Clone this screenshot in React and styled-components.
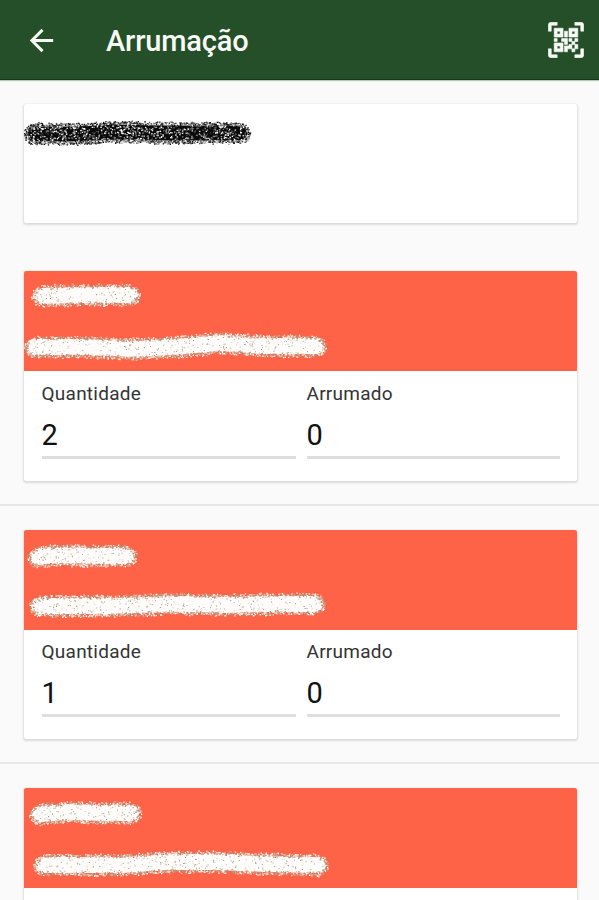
import styled, { createGlobalStyle } from "styled-components";

const GlobalStyle = createGlobalStyle`
  *,
  *::before,
  *::after {
    box-sizing: border-box;
  }

  body {
    margin: 0;
    height: 900px;
    overflow: hidden;
    background: #fafafa;
    color: #111;
    font-family: Roboto, "Liberation Sans", sans-serif;
  }
`;

const Screen = styled.div`
  height: 900px;
  overflow: hidden;
`;

const AppBar = styled.header`
  display: flex;
  align-items: center;
  height: 80px;
  padding: 1px 15px 0 24px;
  background: #254f29;
  border-bottom: 1px solid #0f3d17;
  box-shadow: 0 1px 1px #b5c9b7;
  color: #f8fbf5;
`;

const IconButton = styled.button`
  display: flex;
  padding: 0;
  border: none;
  background: none;
  color: inherit;
`;

const Title = styled.h1`
  flex: 1;
  margin: 1px 0 0 47px;
  font-size: 29px;
  font-weight: 500;
  line-height: 40px;
  letter-spacing: -0.15px;
`;

const Card = styled.section`
  overflow: hidden;
  background: #fff;
  border-radius: 2px;
  box-shadow: 0 1px 2px 1px rgba(0, 0, 0, 0.12);
`;

const Summary = styled(Card)`
  height: 119px;
  margin: 24px 22px 24px 24px;
`;

const Item = styled.li`
  padding: 24px 22px 23px 24px;
  border-bottom: 2px solid #e8e8e8;
`;

const List = styled.ul`
  margin: 0;
  padding: 0;
  list-style: none;
`;

const CardHeader = styled.div`
  height: 100px;
  background: #ff6347;
`;

const Fields = styled.div`
  display: grid;
  grid-template-columns: 254px 253px;
  column-gap: 11px;
  height: 109.5px;
  padding: 9.5px 18px 0 17.5px;
`;

const Label = styled.div`
  font-size: 19px;
  line-height: 26px;
  letter-spacing: 0.25px;
  color: #333;
`;

const Value = styled.div`
  height: 52px;
  padding-top: 10px;
  border-bottom: 3px solid #dedede;
  font-size: 29px;
  line-height: 36px;
`;

const Drawing = styled.svg`
  display: block;
`;

const whiteSpray = {
  core: "#fdfcfa",
  coreWidth: 16,
  edge: ["#fdfaf6", "#fff", "#e9d8c6", "#c8a68c", "#b88970"],
  specks: ["#d9c9b9", "#b5a596", "#eee4da", "#a08f82"],
  speckRate: 1.1,
  speckSize: 1,
  grain: 1.4,
};

const blackSpray = {
  core: "#0b0b0b",
  coreWidth: 15,
  edge: ["#000", "#111", "#555", "#999", "#222"],
  specks: ["#aaa", "#eee", "#777", "#fff", "#444"],
  speckRate: 3.3,
  speckSize: 1.3,
  grain: 1.3,
};

const items = [
  {
    id: 1,
    quantity: 2,
    stored: 0,
    code: [[17, 25], [60, 24], [106, 24]],
    name: [[10, 76], [60, 76], [110, 78], [150, 76], [199, 72], [235, 75], [292, 75]],
  },
  {
    id: 2,
    quantity: 1,
    stored: 0,
    code: [[13, 27], [37, 25], [65, 26], [103, 26]],
    name: [[15, 76], [85, 76], [153, 74], [203, 75], [245, 74], [291, 74]],
  },
  {
    id: 3,
    code: [[15, 26], [46, 24], [80, 25], [107, 25]],
    name: [[19, 77], [100, 77], [145, 74], [190, 74], [240, 76], [294, 77]],
  },
];

function createRandom(seed) {
  let state = seed;
  return () => {
    state = (state * 1664525 + 1013904223) % 4294967296;
    return state / 4294967296;
  };
}

function heightAt(points, x) {
  const next = points.findIndex((p) => p[0] >= x);
  if (next === -1) return points[points.length - 1][1];
  if (next === 0) return points[0][1];
  const [x1, y1] = points[next - 1];
  const [x2, y2] = points[next];
  return y1 + ((y2 - y1) * (x - x1)) / (x2 - x1);
}

function dot(x, y, size) {
  return `M${x.toFixed(1)} ${y.toFixed(1)}h${size}v${size}h-${size}z`;
}

// Grain is grouped by colour, so a stroke needs only one path for each colour
function scatter(points, spray, seed) {
  const random = createRandom(seed);
  const start = points[0][0];
  const end = points[points.length - 1][0];
  const edge = spray.edge.map(() => "");
  const specks = spray.specks.map(() => "");

  for (let x = start; x <= end; x += 0.28) {
    const side = random() < 0.5 ? -1 : 1;
    const distance = 6.5 + (random() + random()) * 2.5;
    const i = Math.floor(random() * edge.length);
    edge[i] += dot(x, heightAt(points, x) + side * distance - 0.5, spray.grain);
  }

  [start, end].forEach((x, index) => {
    for (let n = 0; n < 60; n++) {
      const angle = (random() - 0.5) * Math.PI + (index === 0 ? Math.PI : 0);
      const distance = 6 + random() * 4;
      const i = Math.floor(random() * edge.length);
      edge[i] += dot(
        x + Math.cos(angle) * distance,
        heightAt(points, x) + Math.sin(angle) * distance,
        spray.grain
      );
    }
  });

  const count = (end - start + 14) * spray.speckRate;
  for (let n = 0; n < count; n++) {
    const x = start - 7 + random() * (end - start + 14);
    const y = heightAt(points, x) + (random() - 0.5) * 16;
    const i = Math.floor(random() * specks.length);
    specks[i] += dot(x, y, spray.speckSize);
  }

  return { edge, specks };
}

function Scribble({ points, spray = whiteSpray, seed }) {
  const { edge, specks } = scatter(points, spray, seed);

  return (
    <g>
      <polyline
        points={points.join(" ")}
        fill="none"
        stroke={spray.core}
        strokeWidth={spray.coreWidth}
        strokeLinecap="round"
        strokeLinejoin="round"
      />
      {edge.map((d, i) => (
        <path key={`edge-${i}`} d={d} fill={spray.edge[i]} />
      ))}
      {specks.map((d, i) => (
        <path key={`speck-${i}`} d={d} fill={spray.specks[i]} />
      ))}
    </g>
  );
}

function ArrowBack() {
  return (
    <svg width="35" height="35" viewBox="0 0 24 24" fill="currentColor">
      <path d="M20 11H7.83l5.59-5.59L12 4l-8 8 8 8 1.41-1.41L7.83 13H20v-2z" />
    </svg>
  );
}

function QrCodeScan() {
  return (
    <svg
      width="36"
      height="36"
      viewBox="-0.2 -0.2 24.4 24.4"
      fill="currentColor"
      stroke="currentColor"
      strokeWidth="0.4"
      strokeLinejoin="round"
    >
      <path d="M4,4H10V10H4V4M20,4V10H14V4H20M14,15H16V13H14V11H16V13H18V11H20V13H18V15H20V18H18V20H16V18H13V20H11V16H14V15M16,15V18H18V15H16M4,20V14H10V20H4M6,6V8H8V6H6M16,6V8H18V6H16M6,16V18H8V16H6M4,11H6V13H4V11M9,11H13V15H11V13H9V11M11,6H13V10H11V6M2,2V6H0V2A2,2 0 0,1 2,0H6V2H2M22,0A2,2 0 0,1 24,2V6H22V2H18V0H22M2,18V22H6V24H2A2,2 0 0,1 0,22V18H2M22,22V18H24V22A2,2 0 0,1 22,24H18V22H22Z" />
    </svg>
  );
}

function StorageItem({ item }) {
  const { id, quantity, stored, code, name } = item;

  return (
    <Item>
      <Card>
        <CardHeader>
          <Drawing width="553" height="100">
            <Scribble points={code} seed={id * 31} />
            <Scribble points={name} seed={id * 77} />
          </Drawing>
        </CardHeader>
        <Fields>
          {quantity !== undefined && (
            <>
              <div>
                <Label>Quantidade</Label>
                <Value>{quantity}</Value>
              </div>
              <div>
                <Label>Arrumado</Label>
                <Value>{stored}</Value>
              </div>
            </>
          )}
        </Fields>
      </Card>
    </Item>
  );
}

function App() {
  return (
    <>
      <GlobalStyle />
      <Screen>
        <AppBar>
          <IconButton>
            <ArrowBack />
          </IconButton>
          <Title>Arrumação</Title>
          <IconButton>
            <QrCodeScan />
          </IconButton>
        </AppBar>
        <Summary>
          <Drawing width="553" height="119">
            <Scribble
              points={[[9, 30], [50, 30], [95, 28], [140, 29], [216, 29]]}
              spray={blackSpray}
              seed={9}
            />
          </Drawing>
        </Summary>
        <List>
          {items.map((item) => (
            <StorageItem item={item} key={item.id} />
          ))}
        </List>
      </Screen>
    </>
  );
}

export default App;
